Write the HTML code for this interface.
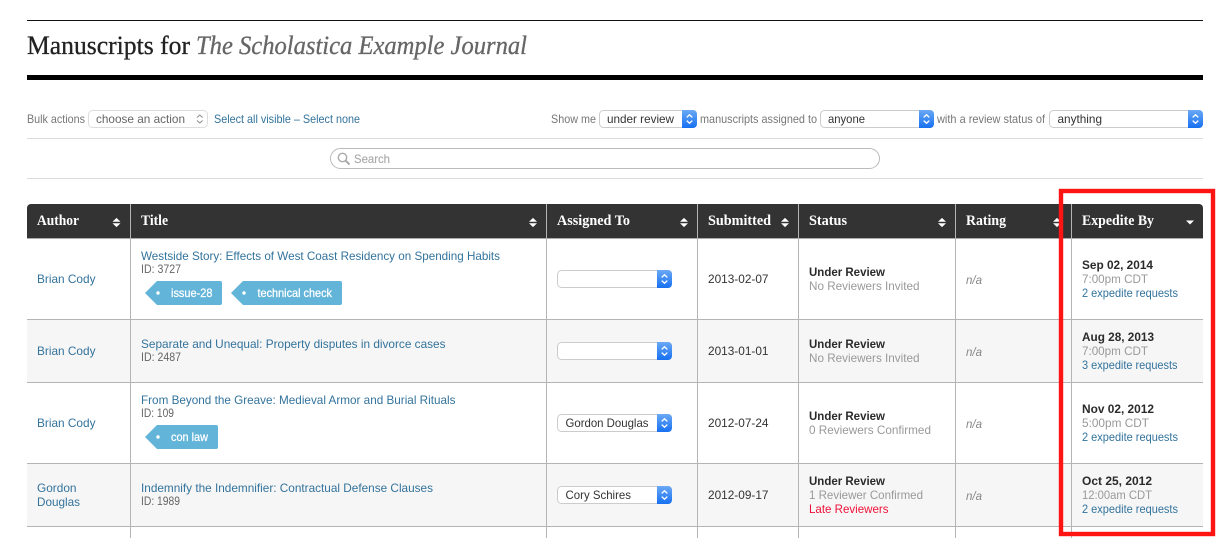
<!DOCTYPE html>
<html lang="en"><head><meta charset="utf-8"><title>Manuscripts</title>
<style>
html,body{margin:0;padding:0;background:#fff;width:1227px;height:538px;overflow:hidden}
svg{display:block}
text{font-family:"Liberation Sans",sans-serif;font-size:12px;white-space:pre}
.h1{font-family:"Liberation Serif",serif;font-size:26px;fill:#222;stroke:#222;stroke-width:.3px}
.h1i{font-family:"Liberation Serif",serif;font-size:26px;font-style:italic;fill:#666;stroke:#666;stroke-width:.3px}
.th{font-family:"Liberation Serif",serif;font-size:15px;font-weight:bold;fill:#fff}
.g{fill:#777}.l{fill:#33739c}.d{fill:#333}.id{fill:#666}.m{fill:#999}
.b{font-weight:bold;fill:#2b2b2b;font-size:11.6px}.na{font-style:italic;fill:#888}
.t{fill:#fff;font-size:11.6px;stroke:#fff;stroke-width:.25px}.r{fill:#ee1038}.s{fill:#aaa;stroke:#aaa;stroke-width:.15px}
</style></head><body>
<svg width="1227" height="538" viewBox="0 0 1227 538" xmlns="http://www.w3.org/2000/svg">
<defs>
<linearGradient id="bl" x1="0" y1="0" x2="0" y2="1"><stop offset="0" stop-color="#6aa9f5"/><stop offset="1" stop-color="#1670f2"/></linearGradient>
<g id="cap"><path d="M0 0H11a4 4 0 0 1 4 4V14a4 4 0 0 1-4 4H0Z" fill="url(#bl)"/><path d="M4.7 7.4L7.5 4.8L10.3 7.4M4.7 10.6L7.5 13.2L10.3 10.6" fill="none" stroke="#fff" stroke-width="1.3"/></g>
<g id="sort"><path d="M-4 -0.7L0 -4.6L4 -0.7ZM-4 0.7L0 4.6L4 0.7Z" fill="#fff"/></g>
</defs>

<rect x="27" y="20" width="1176" height="1" fill="#111"/>
<text class="h1" x="27" y="54" textLength="163" lengthAdjust="spacingAndGlyphs">Manuscripts for</text>
<text class="h1i" x="196" y="54" textLength="331" lengthAdjust="spacingAndGlyphs">The Scholastica Example Journal</text>
<rect x="27" y="75" width="1176" height="5" fill="#000"/>

<text class="g" x="27" y="123" textLength="58" lengthAdjust="spacingAndGlyphs">Bulk actions</text>
<rect x="88.5" y="110.5" width="119" height="17" rx="4" fill="#fff" stroke="#ddd"/>
<text class="id" x="96" y="123" textLength="89" lengthAdjust="spacingAndGlyphs">choose an action</text>
<path d="M197 117.5L199.8 115L202.6 117.5M197 120.5L199.8 123L202.6 120.5" fill="none" stroke="#888" stroke-width="1"/>
<text class="l" x="214" y="123" textLength="146" lengthAdjust="spacingAndGlyphs">Select all visible – Select none</text>

<text class="g" x="551" y="123" textLength="45" lengthAdjust="spacingAndGlyphs">Show me</text>
<rect x="599.5" y="110.5" width="97" height="17" rx="4" fill="#fff" stroke="#ccc"/>
<use href="#cap" x="682" y="110"/>
<text class="d" x="607" y="123" textLength="67" lengthAdjust="spacingAndGlyphs">under review</text>
<text class="g" x="700" y="123" textLength="117" lengthAdjust="spacingAndGlyphs">manuscripts assigned to</text>
<rect x="820.5" y="110.5" width="113" height="17" rx="4" fill="#fff" stroke="#ccc"/>
<use href="#cap" x="919" y="110"/>
<text class="d" x="828" y="123" textLength="37" lengthAdjust="spacingAndGlyphs">anyone</text>
<text class="g" x="937" y="123" textLength="108" lengthAdjust="spacingAndGlyphs">with a review status of</text>
<rect x="1049.5" y="110.5" width="153" height="17" rx="4" fill="#fff" stroke="#ccc"/>
<use href="#cap" x="1188" y="110"/>
<text class="d" x="1057.5" y="123" textLength="44.5" lengthAdjust="spacingAndGlyphs">anything</text>

<rect x="27" y="138" width="1176" height="1" fill="#ddd"/>
<rect x="330.5" y="148.5" width="549" height="20" rx="10" fill="#fff" stroke="#bbb"/>
<circle cx="342.5" cy="157.5" r="4.2" fill="none" stroke="#aaa" stroke-width="1.4"/>
<path d="M345.5 160.5L349.5 164.5" stroke="#aaa" stroke-width="2"/>
<text class="s" x="354" y="163" textLength="36" lengthAdjust="spacingAndGlyphs">Search</text>
<rect x="27" y="178" width="1176" height="1" fill="#ddd"/>

<!-- table -->
<path d="M27 238V208a4 4 0 0 1 4-4H1199a4 4 0 0 1 4 4V238Z" fill="#333"/>
<rect x="27" y="238" width="1176" height="1" fill="#aaa"/>
<rect x="27" y="320" width="1176" height="62" fill="#f6f6f6"/>
<rect x="27" y="464" width="1176" height="62" fill="#f6f6f6"/>
<g fill="#b4b4b4">
<rect x="27" y="319" width="1176" height="1"/><rect x="27" y="382" width="1176" height="1"/>
<rect x="27" y="463" width="1176" height="1"/><rect x="27" y="526" width="1176" height="1"/>
<rect x="130" y="204" width="1" height="334"/><rect x="546" y="204" width="1" height="334"/>
<rect x="697" y="204" width="1" height="334"/><rect x="798" y="204" width="1" height="334"/>
<rect x="955" y="204" width="1" height="334"/><rect x="1071" y="204" width="1" height="334"/>
</g>

<text class="th" x="37" y="225" textLength="42" lengthAdjust="spacingAndGlyphs">Author</text>
<text class="th" x="141" y="225" textLength="27" lengthAdjust="spacingAndGlyphs">Title</text>
<text class="th" x="557" y="225" textLength="73" lengthAdjust="spacingAndGlyphs">Assigned To</text>
<text class="th" x="708" y="225" textLength="63" lengthAdjust="spacingAndGlyphs">Submitted</text>
<text class="th" x="809" y="225" textLength="38" lengthAdjust="spacingAndGlyphs">Status</text>
<text class="th" x="966" y="225" textLength="40" lengthAdjust="spacingAndGlyphs">Rating</text>
<text class="th" x="1082" y="225" textLength="72" lengthAdjust="spacingAndGlyphs">Expedite By</text>
<use href="#sort" x="116.5" y="222.5"/><use href="#sort" x="533" y="222.5"/><use href="#sort" x="684" y="222.5"/>
<use href="#sort" x="785" y="222.5"/><use href="#sort" x="942" y="222.5"/><use href="#sort" x="1057" y="222.5"/>
<path d="M1186 220.5H1194L1190 224.5Z" fill="#fff"/>

<!-- row 1 -->
<text class="l" x="37" y="283" textLength="58.5" lengthAdjust="spacingAndGlyphs">Brian Cody</text>
<text class="l" x="141" y="260" textLength="359" lengthAdjust="spacingAndGlyphs">Westside Story: Effects of West Coast Residency on Spending Habits</text>
<text class="id" x="141" y="273" textLength="40" lengthAdjust="spacingAndGlyphs">ID: 3727</text>
<path d="M157 281H220a2 2 0 0 1 2 2V303a2 2 0 0 1-2 2H157L145 293Z" fill="#62b4d9"/>
<circle cx="158" cy="293" r="1.7" fill="#fff"/>
<text class="t" x="171" y="297" textLength="41.5" lengthAdjust="spacingAndGlyphs">issue-28</text>
<path d="M243 281H340a2 2 0 0 1 2 2V303a2 2 0 0 1-2 2H243L231 293Z" fill="#62b4d9"/>
<circle cx="244" cy="293" r="1.7" fill="#fff"/>
<text class="t" x="257.5" y="297" textLength="74.5" lengthAdjust="spacingAndGlyphs">technical check</text>
<rect x="557.5" y="270.5" width="114" height="17" rx="4" fill="#fff" stroke="#ccc"/><use href="#cap" x="657" y="270"/>
<text class="d" x="708" y="283" textLength="60.5" lengthAdjust="spacingAndGlyphs">2013-02-07</text>
<text class="b" x="809" y="276" textLength="76" lengthAdjust="spacingAndGlyphs">Under Review</text>
<text class="m" x="809" y="290" textLength="110.5" lengthAdjust="spacingAndGlyphs">No Reviewers Invited</text>
<text class="na" x="966" y="284" textLength="16" lengthAdjust="spacingAndGlyphs">n/a</text>
<text class="b" x="1082" y="269" textLength="71" lengthAdjust="spacingAndGlyphs">Sep 02, 2014</text>
<text class="m" x="1082" y="283" textLength="66" lengthAdjust="spacingAndGlyphs">7:00pm CDT</text>
<text class="l" x="1082" y="297" textLength="96" lengthAdjust="spacingAndGlyphs">2 expedite requests</text>

<!-- row 2 -->
<text class="l" x="37" y="355" textLength="58.5" lengthAdjust="spacingAndGlyphs">Brian Cody</text>
<text class="l" x="141" y="348" textLength="304.5" lengthAdjust="spacingAndGlyphs">Separate and Unequal: Property disputes in divorce cases</text>
<text class="id" x="141" y="361" textLength="40" lengthAdjust="spacingAndGlyphs">ID: 2487</text>
<rect x="557.5" y="342.5" width="114" height="17" rx="4" fill="#fff" stroke="#ccc"/><use href="#cap" x="657" y="342"/>
<text class="d" x="708" y="355" textLength="60.5" lengthAdjust="spacingAndGlyphs">2013-01-01</text>
<text class="b" x="809" y="348" textLength="76" lengthAdjust="spacingAndGlyphs">Under Review</text>
<text class="m" x="809" y="362" textLength="110.5" lengthAdjust="spacingAndGlyphs">No Reviewers Invited</text>
<text class="na" x="966" y="356" textLength="16" lengthAdjust="spacingAndGlyphs">n/a</text>
<text class="b" x="1082" y="341" textLength="72" lengthAdjust="spacingAndGlyphs">Aug 28, 2013</text>
<text class="m" x="1082" y="355" textLength="66" lengthAdjust="spacingAndGlyphs">7:00pm CDT</text>
<text class="l" x="1082" y="369" textLength="95.5" lengthAdjust="spacingAndGlyphs">3 expedite requests</text>

<!-- row 3 -->
<text class="l" x="37" y="427" textLength="58.5" lengthAdjust="spacingAndGlyphs">Brian Cody</text>
<text class="l" x="141" y="404" textLength="314.5" lengthAdjust="spacingAndGlyphs">From Beyond the Greave: Medieval Armor and Burial Rituals</text>
<text class="id" x="141" y="417" textLength="33" lengthAdjust="spacingAndGlyphs">ID: 109</text>
<path d="M157 425H216a2 2 0 0 1 2 2V447a2 2 0 0 1-2 2H157L145 437Z" fill="#62b4d9"/>
<circle cx="158" cy="437" r="1.7" fill="#fff"/>
<text class="t" x="171" y="441" textLength="37" lengthAdjust="spacingAndGlyphs">con law</text>
<rect x="557.5" y="414.5" width="114" height="17" rx="4" fill="#fff" stroke="#ccc"/><use href="#cap" x="657" y="414"/>
<text class="d" x="565.5" y="427" textLength="83" lengthAdjust="spacingAndGlyphs">Gordon Douglas</text>
<text class="d" x="708" y="427" textLength="60.5" lengthAdjust="spacingAndGlyphs">2012-07-24</text>
<text class="b" x="809" y="420" textLength="76" lengthAdjust="spacingAndGlyphs">Under Review</text>
<text class="m" x="809" y="434" textLength="122" lengthAdjust="spacingAndGlyphs">0 Reviewers Confirmed</text>
<text class="na" x="966" y="428" textLength="16" lengthAdjust="spacingAndGlyphs">n/a</text>
<text class="b" x="1082" y="413" textLength="72" lengthAdjust="spacingAndGlyphs">Nov 02, 2012</text>
<text class="m" x="1082" y="427" textLength="67" lengthAdjust="spacingAndGlyphs">5:00pm CDT</text>
<text class="l" x="1082" y="441" textLength="96" lengthAdjust="spacingAndGlyphs">2 expedite requests</text>

<!-- row 4 -->
<text class="l" x="37" y="492" textLength="39.5" lengthAdjust="spacingAndGlyphs">Gordon</text>
<text class="l" x="37" y="506" textLength="43" lengthAdjust="spacingAndGlyphs">Douglas</text>
<text class="l" x="141" y="492" textLength="292" lengthAdjust="spacingAndGlyphs">Indemnify the Indemnifier: Contractual Defense Clauses</text>
<text class="id" x="141" y="505" textLength="39" lengthAdjust="spacingAndGlyphs">ID: 1989</text>
<rect x="557.5" y="486.5" width="114" height="17" rx="4" fill="#fff" stroke="#ccc"/><use href="#cap" x="657" y="486"/>
<text class="d" x="565.5" y="499" textLength="65.5" lengthAdjust="spacingAndGlyphs">Cory Schires</text>
<text class="d" x="708" y="499" textLength="60.5" lengthAdjust="spacingAndGlyphs">2012-09-17</text>
<text class="b" x="809" y="485" textLength="76" lengthAdjust="spacingAndGlyphs">Under Review</text>
<text class="m" x="809" y="499" textLength="114" lengthAdjust="spacingAndGlyphs">1 Reviewer Confirmed</text>
<text class="r" x="809" y="513" textLength="79.5" lengthAdjust="spacingAndGlyphs">Late Reviewers</text>
<text class="na" x="966" y="500" textLength="16" lengthAdjust="spacingAndGlyphs">n/a</text>
<text class="b" x="1082" y="485" textLength="70" lengthAdjust="spacingAndGlyphs">Oct 25, 2012</text>
<text class="m" x="1082" y="499" textLength="70" lengthAdjust="spacingAndGlyphs">12:00am CDT</text>
<text class="l" x="1082" y="513" textLength="96" lengthAdjust="spacingAndGlyphs">2 expedite requests</text>

<rect x="1061" y="191" width="152" height="343" fill="none" stroke="#ff1414" stroke-width="4.4"/>
</svg>
</body></html>
